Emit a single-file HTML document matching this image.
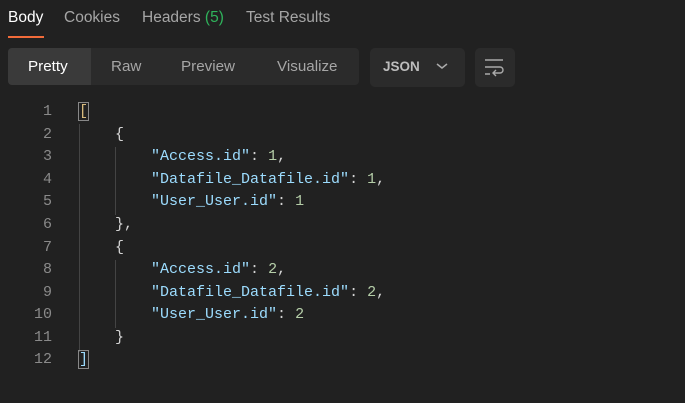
<!DOCTYPE html>
<html><head><style>
*{margin:0;padding:0;box-sizing:border-box}
body{width:685px;height:403px;background:#212121;font-family:"Liberation Sans",sans-serif;overflow:hidden;position:relative}
.tab{position:absolute;top:9px;font-size:15.5px;color:#a6a6a6}
.ul{position:absolute;left:8px;top:36px;width:36px;height:2px;background:#f26b3a}
.seg{position:absolute;left:8px;top:48px;width:351px;height:37px;background:#2b2b2b;border-radius:4px}
.act{position:absolute;left:8px;top:48px;width:83px;height:37px;background:#3a3a3a;border-radius:4px 0 0 4px}
.s{position:absolute;top:58px;font-size:15.2px;color:#a6a6a6}
.json{position:absolute;left:370px;top:48px;width:95px;height:39px;background:#2b2b2b;border-radius:5px}
.wrap{position:absolute;left:475px;top:48px;width:40px;height:39px;background:#2b2b2b;border-radius:5px}
.code{position:absolute;top:101px;left:0;font-family:"Liberation Mono",monospace;font-size:15px}
.ln{position:absolute;width:52px;text-align:right;color:#8a8a8a}
.c{position:absolute;left:79px;white-space:pre;color:#d4d4d4}
.k{color:#9cdcfe}.n{color:#b5cea8}.b{color:#d7ba7d}
.g{position:absolute;width:1px;background:#444}
</style></head><body>
<div class="tab" style="left:8px;color:#fff">Body</div>
<div class="tab" style="left:64px">Cookies</div>
<div class="tab" style="left:142px">Headers <span style="color:#2fb35b">(5)</span></div>
<div class="tab" style="left:246px">Test Results</div>
<div class="ul"></div>
<div class="seg"></div><div class="act"></div>
<div class="s" style="left:28px;color:#fff">Pretty</div>
<div class="s" style="left:111px">Raw</div>
<div class="s" style="left:181px">Preview</div>
<div class="s" style="left:277px">Visualize</div>
<div class="json"></div>
<div style="position:absolute;left:383px;top:59px;font-size:13.5px;font-weight:bold;color:#bdbdbd">JSON</div>
<svg style="position:absolute;left:436px;top:62px" width="12" height="8"><path d="M1 2l5 4 5-4" stroke="#aaa" stroke-width="1.5" fill="none"/></svg>
<div class="wrap"></div>
<svg style="position:absolute;left:484px;top:58px" width="22" height="20"><path d="M1 2h18M1 9h15a3 3 0 0 1 0 6h-6M12 12l-3 3 3 3M1 16h5" stroke="#aaa" stroke-width="1.4" fill="none"/></svg>
<div class="g" style="left:79px;top:124px;height:228px"></div>
<div class="g" style="left:115px;top:147px;height:68px"></div>
<div class="g" style="left:115px;top:260px;height:68px"></div>
<div class="code">
<div class="ln" style="top:2px">1</div><div class="ln" style="top:25px">2</div><div class="ln" style="top:47px">3</div><div class="ln" style="top:70px">4</div><div class="ln" style="top:92px">5</div><div class="ln" style="top:115px">6</div><div class="ln" style="top:138px">7</div><div class="ln" style="top:160px">8</div><div class="ln" style="top:183px">9</div><div class="ln" style="top:205px">10</div><div class="ln" style="top:228px">11</div><div class="ln" style="top:250px">12</div>
<div class="c" style="top:2px"><span class="b" style="outline:1px solid #888">[</span></div>
<div class="c" style="top:25px">    {</div>
<div class="c" style="top:47px">        <span class="k">"Access.id"</span>: <span class="n">1</span>,</div>
<div class="c" style="top:70px">        <span class="k">"Datafile_Datafile.id"</span>: <span class="n">1</span>,</div>
<div class="c" style="top:92px">        <span class="k">"User_User.id"</span>: <span class="n">1</span></div>
<div class="c" style="top:115px">    },</div>
<div class="c" style="top:138px">    {</div>
<div class="c" style="top:160px">        <span class="k">"Access.id"</span>: <span class="n">2</span>,</div>
<div class="c" style="top:183px">        <span class="k">"Datafile_Datafile.id"</span>: <span class="n">2</span>,</div>
<div class="c" style="top:205px">        <span class="k">"User_User.id"</span>: <span class="n">2</span></div>
<div class="c" style="top:228px">    }</div>
<div class="c" style="top:250px"><span class="k" style="outline:1px solid #888">]</span></div>
</div>
</body></html>
